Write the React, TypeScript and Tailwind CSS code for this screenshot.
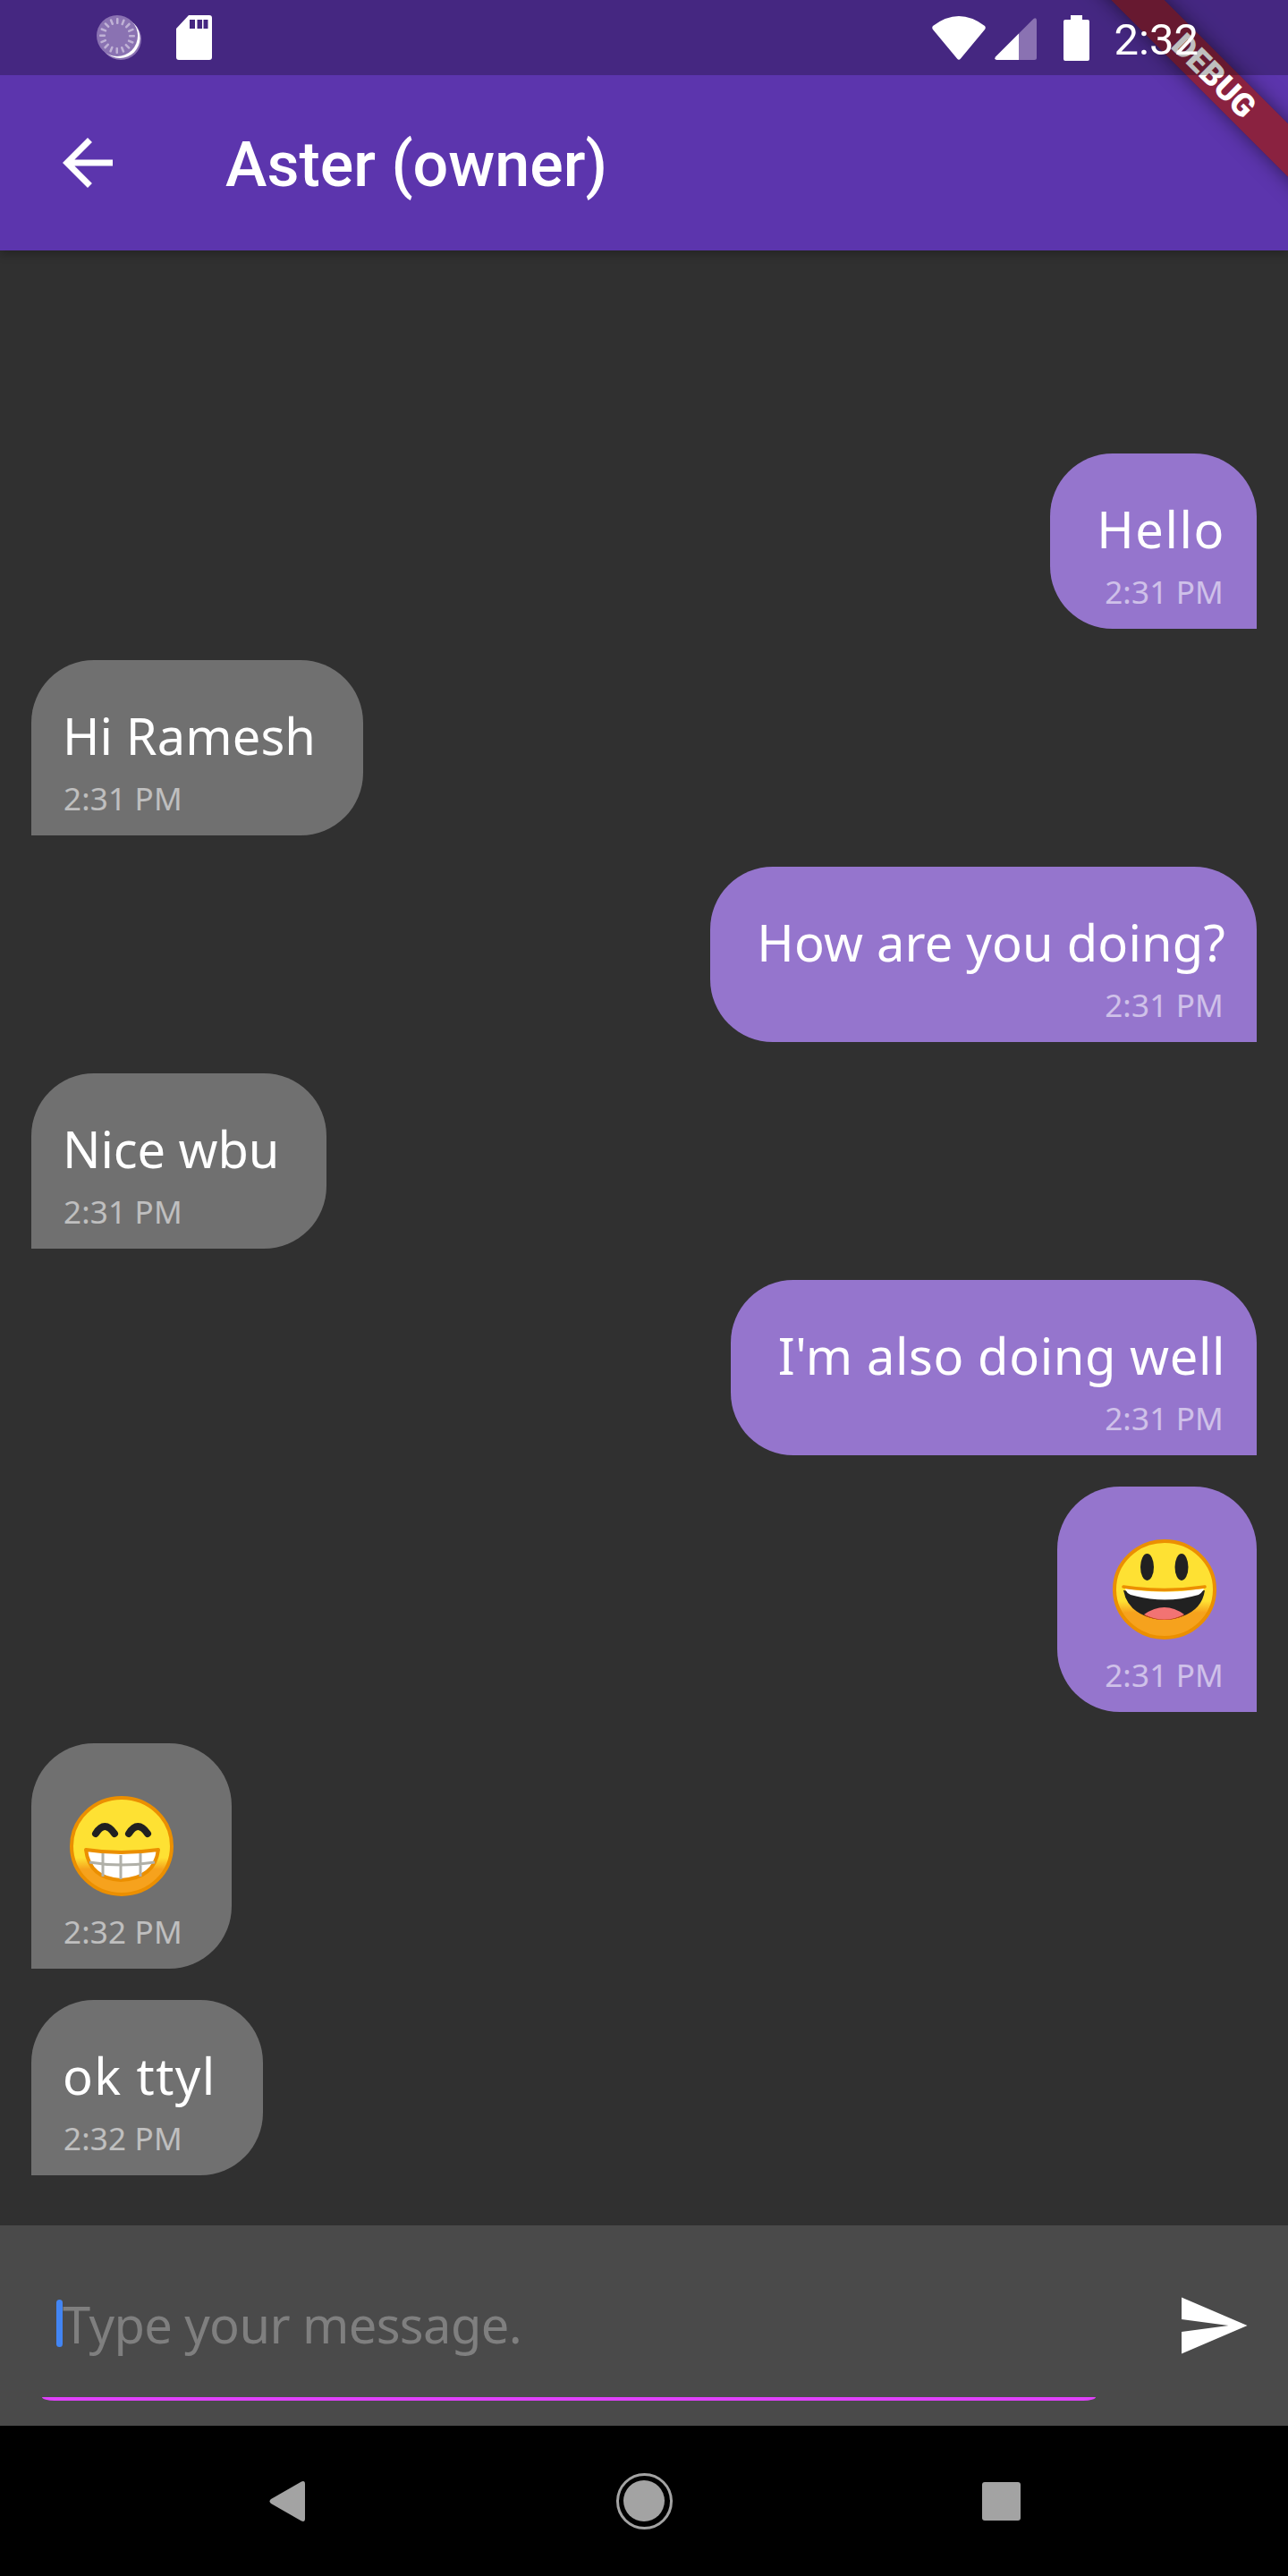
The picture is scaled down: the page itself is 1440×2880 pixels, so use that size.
import type { ReactNode } from 'react'

const bodyFont = { fontFamily: '"Noto Sans", sans-serif' }

function SyncIcon() {
  const ticks = Array.from({ length: 16 }, (_, i) => i * 22.5)
  return (
    <svg width="50" height="50" viewBox="0 0 50 50">
      <circle cx="27" cy="27" r="23" fill="#8a72b2" />
      <circle cx="26" cy="25.5" r="22.5" fill="#ffffff" />
      <circle cx="23" cy="23" r="23" fill="#8a72b2" />
      {ticks.map((deg) => (
        <rect key={deg} x="22" y="3" width="2.5" height="7" rx="1" fill="#c0b2d6" transform={`rotate(${deg} 23 23)`} />
      ))}
    </svg>
  )
}

function SdIcon() {
  return (
    <svg width="40" height="50" viewBox="0 0 40 50">
      <path
        fillRule="evenodd"
        fill="#ffffff"
        d="M14 0H37a3 3 0 0 1 3 3V47a3 3 0 0 1-3 3H3a3 3 0 0 1-3-3V15ZM15 5V15H21V5ZM23.5 5V15H29V5ZM30.5 5V15H35.5V5Z"
      />
    </svg>
  )
}

function WifiIcon() {
  return (
    <svg width="60" height="49" viewBox="0 0 60 49">
      <path fill="#ffffff" d="M1 11Q30 -11 59 11Q60.500 13 59 15L32 47.500Q30 50 28 47.500L1 15Q-0.500 13 1 11Z" />
    </svg>
  )
}

function CellIcon() {
  return (
    <svg width="47" height="47" viewBox="0 0 47 47">
      <path fill="#ffffff" d="M1 43.500L27 17.500V47H2.500Q-1 47 1 43.500Z" />
      <path fill="#8a72b2" d="M27 17.500L43.500 1Q47 -1 47 3V44.500Q47 47 44.500 47H27Z" />
    </svg>
  )
}

function BatteryIcon() {
  return (
    <svg width="29" height="51" viewBox="0 0 29 51">
      <path fill="#ffffff" d="M8 0H21V5H27a2 2 0 0 1 2 2V49a2 2 0 0 1-2 2H2a2 2 0 0 1-2-2V7a2 2 0 0 1 2-2H8Z" />
    </svg>
  )
}

function EmojiFace({ id, children }: { id: string; children: ReactNode }) {
  return (
    <svg width="116" height="112" viewBox="0 0 116 112">
      <defs>
        <linearGradient id={id} x1="0" y1="0" x2="0" y2="1">
          <stop offset="0.62" stopColor="#fee133" />
          <stop offset="0.74" stopColor="#f6a21d" />
        </linearGradient>
      </defs>
      <ellipse cx="58" cy="56" rx="56" ry="54" fill={`url(#${id})`} stroke="#eb8f00" strokeWidth="4" />
      {children}
    </svg>
  )
}

function SmileEmoji() {
  return (
    <EmojiFace id="smile">
      <ellipse cx="38.500" cy="31" rx="7.500" ry="15" fill="#212121" />
      <ellipse cx="77" cy="31" rx="7.500" ry="15" fill="#212121" />
      <path d="M12 57Q58 66 103 57Q100 78 78 86Q58 94 37 86Q16 78 12 57Z" fill="#212121" />
      <path d="M35 84Q58 68 80 84Q58 96 35 84Z" fill="#f27373" />
      <path d="M35 84Q58 95 80 84L78 86Q58 94 37 86Z" fill="#dd4a10" />
      <path d="M14 55Q58 62 102 55Q100 60 96 62Q58 73 20 62Q15 60 14 55Z" fill="#ffffff" />
      <path d="M12 53Q58 60 103 53" fill="none" stroke="#eb8f00" strokeWidth="3.500" strokeLinecap="round" />
    </EmojiFace>
  )
}

function GrinEmoji() {
  return (
    <EmojiFace id="grin">
      <path d="M29 42Q39 26 50 42M66 42Q76 26 87 42" fill="none" stroke="#212121" strokeWidth="8" strokeLinecap="round" />
      <path d="M18 60Q57 66 99 60Q95 92 57 94Q22 92 18 60Z" fill="#ffffff" stroke="#eb8f00" strokeWidth="4" strokeLinejoin="round" />
      <path d="M22 74Q57 80 95 74M37 64V90M57 66V93M79 64V90" fill="none" stroke="#b0b0a8" strokeWidth="3" />
    </EmojiFace>
  )
}

type Message = {
  text?: string
  emoji?: ReactNode
  time: string
  mine: boolean
  // per line letter spacing, the original font is a bit wider than Noto Sans
  tracking?: string
}

const messages: Message[] = [
  { text: 'Hello', time: '2:31 PM', mine: true, tracking: 'tracking-[1.6px]' },
  { text: 'Hi Ramesh', time: '2:31 PM', mine: false, tracking: 'tracking-[0.1px]' },
  { text: 'How are you doing?', time: '2:31 PM', mine: true, tracking: 'tracking-[0.2px]' },
  { text: 'Nice wbu', time: '2:31 PM', mine: false, tracking: 'tracking-[-0.1px]' },
  { text: "I'm also doing well", time: '2:31 PM', mine: true, tracking: 'tracking-[0.6px]' },
  { emoji: <SmileEmoji />, time: '2:31 PM', mine: true },
  { emoji: <GrinEmoji />, time: '2:32 PM', mine: false },
  { text: 'ok ttyl', time: '2:32 PM', mine: false, tracking: 'tracking-[1.4px]' },
]

function Bubble({ message }: { message: Message }) {
  const { text, emoji, time, mine, tracking } = message
  return (
    <div
      className={`flex flex-col pt-[49px] pb-[20px] rounded-[70px] ${
        mine
          ? 'self-end items-end bg-[#9575cd] rounded-br-none pl-[52.5px] pr-[35px]'
          : 'self-start items-start bg-[#707070] rounded-bl-none pl-[35px] pr-[52.5px]'
      }`}
    >
      {emoji ? (
        <div className={`flex w-[136px] h-[127px] items-center pt-[5px] ${mine ? 'justify-center' : 'justify-start pl-[8px]'}`}>
          {emoji}
        </div>
      ) : (
        <div className={`text-[56px] leading-[71px] text-white whitespace-nowrap ${tracking}`}>{text}</div>
      )}
      <div
        className={`mt-[14px] text-[35px] leading-[42px] tracking-[0.2px] text-white/55 whitespace-nowrap ${
          mine ? 'mr-[2px]' : 'ml-[1px]'
        }`}
      >
        {time}
      </div>
    </div>
  )
}

export default function App() {
  return (
    <div className="flex flex-col w-[1440px] h-[2880px] overflow-hidden bg-[#303030]" style={bodyFont}>
      {/* App bar, status bar dims everything under it including the banner */}
      <header className="relative z-10 overflow-hidden bg-[#5c35ad] shadow-[0_4px_10px_rgba(0,0,0,0.25)] font-['Roboto',sans-serif]">
        <div className="absolute left-[1157px] top-[64px] flex w-[400px] h-[42px] items-center justify-center rotate-45 bg-[#9a1c1c]/75 shadow-[0_0_21px_rgba(0,0,0,0.5)]">
          <span className="text-[36px] leading-none font-black text-white">DEBUG</span>
        </div>

        <div className="relative flex h-[84px] items-center bg-black/25 pl-[108px] pr-[100px]">
          <SyncIcon />
          <div className="ml-[39px]">
            <SdIcon />
          </div>
          <div className="ml-auto">
            <WifiIcon />
          </div>
          <div className="ml-[10px] mt-[2px]">
            <CellIcon />
          </div>
          <div className="ml-[30px]">
            <BatteryIcon />
          </div>
          <span className="ml-[28px] mt-[4px] text-[49px] leading-none text-white">2:32</span>
        </div>

        <div className="relative flex h-[196px] items-center pl-[56px]">
          <svg width="84" height="84" viewBox="0 0 24 24" fill="#ffffff">
            <path d="M20 11H7.830l5.590-5.590L12 4l-8 8 8 8 1.410-1.410L7.830 13H20v-2z" />
          </svg>
          <h1 className="ml-[112px] mt-[3px] text-[70px] leading-none font-medium text-white">Aster (owner)</h1>
        </div>
      </header>

      <main className="flex flex-1 flex-col justify-end gap-[35px] px-[35px] pb-[56px]">
        {messages.map((message, i) => (
          <Bubble key={i} message={message} />
        ))}
      </main>

      <div className="flex h-[224px] bg-[#4a4a4a] pl-[47px] pr-[42px]">
        <div className="flex w-[1178px] flex-col">
          <div className="flex flex-1 items-center pl-[16px] pt-[27px]">
            <span className="w-[7px] h-[53px] rounded-full bg-[#4285f4]" />
            <span className="text-[56px] leading-none tracking-[-0.6px] text-[#7f7f7f]">Type your message.</span>
          </div>
          <div className="mb-[28px] h-[4px] rounded-b-[14px_4px] bg-[#e040fb]" />
        </div>
        <div className="ml-auto flex items-center">
          <svg width="84" height="84" viewBox="0 0 24 24" fill="#ffffff">
            <path d="M2.010 21L23 12 2.010 3 2 10l15 2-15 2z" />
          </svg>
        </div>
      </div>

      <nav className="flex h-[168px] items-center justify-center bg-black">
        <div className="flex w-[399px] justify-center">
          <svg width="40" height="45" viewBox="0 0 40 45">
            <path fill="#a3a3a3" d="M36 0.500Q40 -1 40 3V42Q40 46 36 44.500L2 25Q-1 22.500 2 20Z" />
          </svg>
        </div>
        <div className="flex w-[399px] justify-center">
          <div className="flex w-[63px] h-[63px] items-center justify-center rounded-full border-[3px] border-[#a3a3a3]">
            <div className="w-[46px] h-[46px] rounded-full bg-[#a3a3a3]" />
          </div>
        </div>
        <div className="flex w-[399px] justify-center">
          <div className="w-[43px] h-[43px] rounded-[3px] bg-[#a3a3a3]" />
        </div>
      </nav>
    </div>
  )
}
